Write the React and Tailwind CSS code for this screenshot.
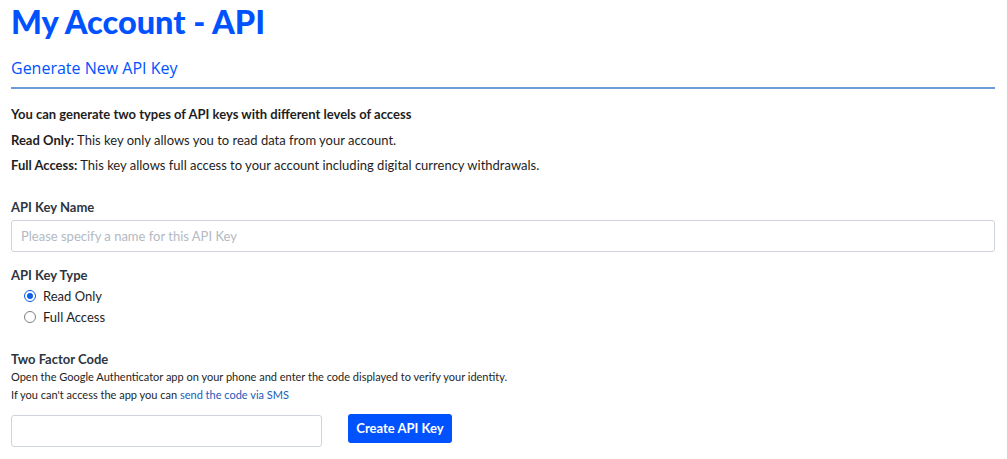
export default function App() {
  return (
    <div className="bg-white w-[1007px] h-[459px] overflow-hidden px-[11px] text-[#1e1e1e]" style={{ fontFamily: 'Lato, "Open Sans", sans-serif' }}>
      <h1 className="text-[32.5px] font-black text-[#0052ff] leading-[44px] w-[984px] whitespace-nowrap">My Account - API</h1>
      <h2 className="text-[16px] text-[#0052ff] mt-[13px] leading-[22px] w-[984px]" style={{ fontFamily: '"Open Sans", Lato, sans-serif' }}>Generate New API Key</h2>
      <div className="w-[984px] h-[2px] bg-[#6f9ad8] mt-[8px]" />

      <p className="text-[13px] font-bold mt-[16px] leading-[18px]">You can generate two types of API keys with different levels of access</p>
      <p className="text-[13px] mt-[8px] leading-[18px]"><span className="font-bold">Read Only:</span> This key only allows you to read data from your account.</p>
      <p className="text-[13px] mt-[7px] leading-[18px]"><span className="font-bold">Full Access:</span> This key allows full access to your account including digital currency withdrawals.</p>

      <label className="block text-[13px] font-bold text-[#2d3640] mt-[24px] leading-[18px]">API Key Name</label>
      <input
        className="block w-[984px] h-[32px] mt-[4px] border border-[#cfd3da] rounded-[3px] px-[9px] text-[13px] placeholder:text-[#b3b9c2] outline-none"
        placeholder="Please specify a name for this API Key"
      />

      <div className="text-[13px] font-bold text-[#2d3640] mt-[14px] leading-[18px]">API Key Type</div>
      <div className="mt-[3px] ml-[13px] flex flex-col gap-[3px]">
        <label className="flex items-center gap-[7px] text-[13px] leading-[18px]">
          <span className="w-[12px] h-[12px] rounded-full border border-[#0a5ee8] flex items-center justify-center">
            <span className="w-[6px] h-[6px] rounded-full bg-[#0a5ee8]" />
          </span>
          Read Only
        </label>
        <label className="flex items-center gap-[7px] text-[13px] leading-[18px]">
          <span className="w-[12px] h-[12px] rounded-full border border-[#7a7f87]" />
          Full Access
        </label>
      </div>

      <div className="text-[13px] font-bold text-[#2d3640] mt-[24px] leading-[18px]">Two Factor Code</div>
      <p className="text-[11px] mt-[1px] leading-[16px]">Open the Google Authenticator app on your phone and enter the code displayed to verify your identity.</p>
      <p className="text-[11px] mt-[2px] leading-[16px]">If you can't access the app you can <a className="text-[#1a5cb8]">send the code via SMS</a></p>

      <div className="flex items-start gap-[26px] mt-[12px]">
        <input className="block w-[311px] h-[32px] border border-[#cfd3da] rounded-[3px] px-[9px] text-[13px] outline-none" />
        <button className="-mt-[1px] h-[29px] w-[104px] bg-[#0052ff] text-white text-[13px] font-bold rounded-[3px] whitespace-nowrap">Create API Key</button>
      </div>
    </div>
  );
}
